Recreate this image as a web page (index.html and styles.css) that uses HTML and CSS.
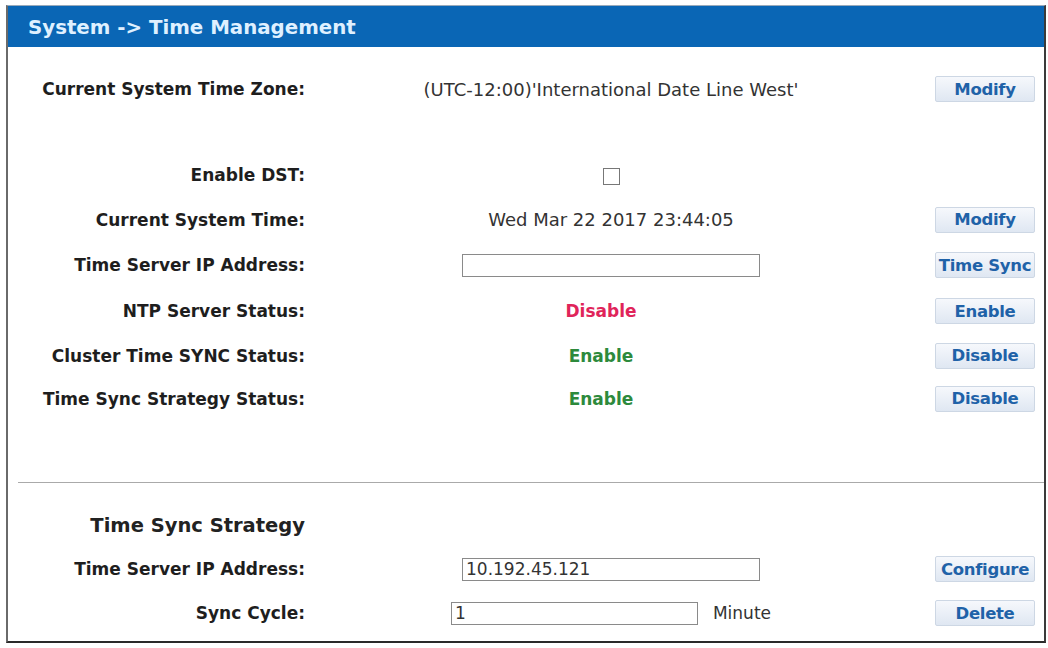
FILE: index.html
```html
<!DOCTYPE html>
<html lang="en">
<head>
    <meta charset="UTF-8">
    <title>Time Management</title>
    <link rel="stylesheet" href="styles.css">
</head>
<body>
<div class="panel">
    <div class="panel-title">System -&gt; Time Management</div>

    <div class="form-grid general">
        <div class="label">Current System Time Zone:</div>
        <div class="value">(UTC-12:00)'International Date Line West'</div>
        <div class="action"><button class="btn">Modify</button></div>

        <div class="spacer"></div>

        <div class="label">Enable DST:</div>
        <div class="value"><span class="check"></span></div>
        <div class="action"></div>

        <div class="label">Current System Time:</div>
        <div class="value">Wed Mar 22 2017 23:44:05</div>
        <div class="action"><button class="btn">Modify</button></div>

        <div class="label">Time Server IP Address:</div>
        <div class="value"><input class="text-input wide" type="text"></div>
        <div class="action"><button class="btn">Time Sync</button></div>

        <div class="label">NTP Server Status:</div>
        <div class="value status-off">Disable</div>
        <div class="action"><button class="btn">Enable</button></div>

        <div class="label">Cluster Time SYNC Status:</div>
        <div class="value status-on">Enable</div>
        <div class="action"><button class="btn">Disable</button></div>

        <div class="label">Time Sync Strategy Status:</div>
        <div class="value status-on">Enable</div>
        <div class="action"><button class="btn">Disable</button></div>
    </div>

    <hr class="divider">

    <div class="form-grid strategy">
        <div class="label heading">Time Sync Strategy</div>
        <div class="value"></div>
        <div class="action"></div>

        <div class="label">Time Server IP Address:</div>
        <div class="value"><input class="text-input wide" type="text" value="10.192.45.121"></div>
        <div class="action"><button class="btn">Configure</button></div>

        <div class="label">Sync Cycle:</div>
        <div class="value"><input class="text-input short" type="text" value="1"><span class="unit">Minute</span></div>
        <div class="action"><button class="btn">Delete</button></div>
    </div>
</div>
</body>
</html>
```

FILE: styles.css
```css
body {
    margin: 0;
    background: #fff;
    font-family: "DejaVu Sans", Verdana, sans-serif;
    color: #222;
}

/* outer frame */
.panel {
    margin: 5px 2px 0 6px;
    height: 638px;
    box-sizing: border-box;
    border-left: 2px solid #6a6a6a;
    border-right: 2px solid #3a3a3a;
    border-bottom: 2px solid #2a2a2a;
    border-top: 1px solid #9ab;
}

.panel-title {
    height: 41px;
    line-height: 43px;
    background: #0a66b5;
    color: #dff0ff;
    font-weight: bold;
    font-size: 19.8px;
    padding-left: 20px;
}

/* label | value | button */
.form-grid {
    display: grid;
    grid-template-columns: 297px 612px 118px;
    grid-auto-rows: 44px;
    align-items: center;
    padding-top: 20px;
}

.form-grid.general {
    grid-template-rows: 44px 41px 45px 45px 46px 46px 43px 43px;
}

.spacer {
    grid-column: 1 / 4;
}

.label {
    text-align: right;
    font-weight: bold;
    font-size: 17px;
    color: #1e1e1e;
    white-space: nowrap;
}

.label.heading {
    font-size: 19.5px;
    color: #222;
}

.value {
    text-align: center;
    font-size: 18px;
    color: #333;
    white-space: nowrap;
}

/* status words sit a little left of the column centre */
.status-off,
.status-on {
    font-weight: bold;
    font-size: 17px;
    padding-right: 20px;
}

.status-off {
    color: #e0245a;
}

.status-on {
    color: #2d8a3c;
}

.check {
    display: inline-block;
    width: 17px;
    height: 17px;
    box-sizing: border-box;
    border: 1px solid #777;
    vertical-align: middle;
    background: #fff;
}

.text-input {
    height: 23px;
    box-sizing: border-box;
    border: 1px solid #8a8a8a;
    font-family: "DejaVu Sans", Verdana, sans-serif;
    font-size: 17px;
    color: #333;
    padding: 0 3px;
    vertical-align: middle;
}

.text-input.wide {
    width: 298px;
}

.text-input.short {
    width: 247px;
}

.unit {
    margin-left: 15px;
    font-size: 17px;
    vertical-align: middle;
}

.action {
    padding-left: 18px;
}

.btn {
    width: 100px;
    height: 26px;
    border: 1px solid #cdd7e4;
    border-radius: 2px;
    background: linear-gradient(#f6f8fc, #dfe7f2);
    color: #1f62a8;
    font-family: "DejaVu Sans", Verdana, sans-serif;
    font-weight: bold;
    font-size: 16.5px;
    letter-spacing: -0.3px;
    padding: 0;
    white-space: nowrap;
    overflow: visible;
}

.divider {
    margin: 62px 0 0 10px;
    border: none;
    border-top: 1px solid #aaa;
}

.strategy {
    padding-top: 20px;
}
```
